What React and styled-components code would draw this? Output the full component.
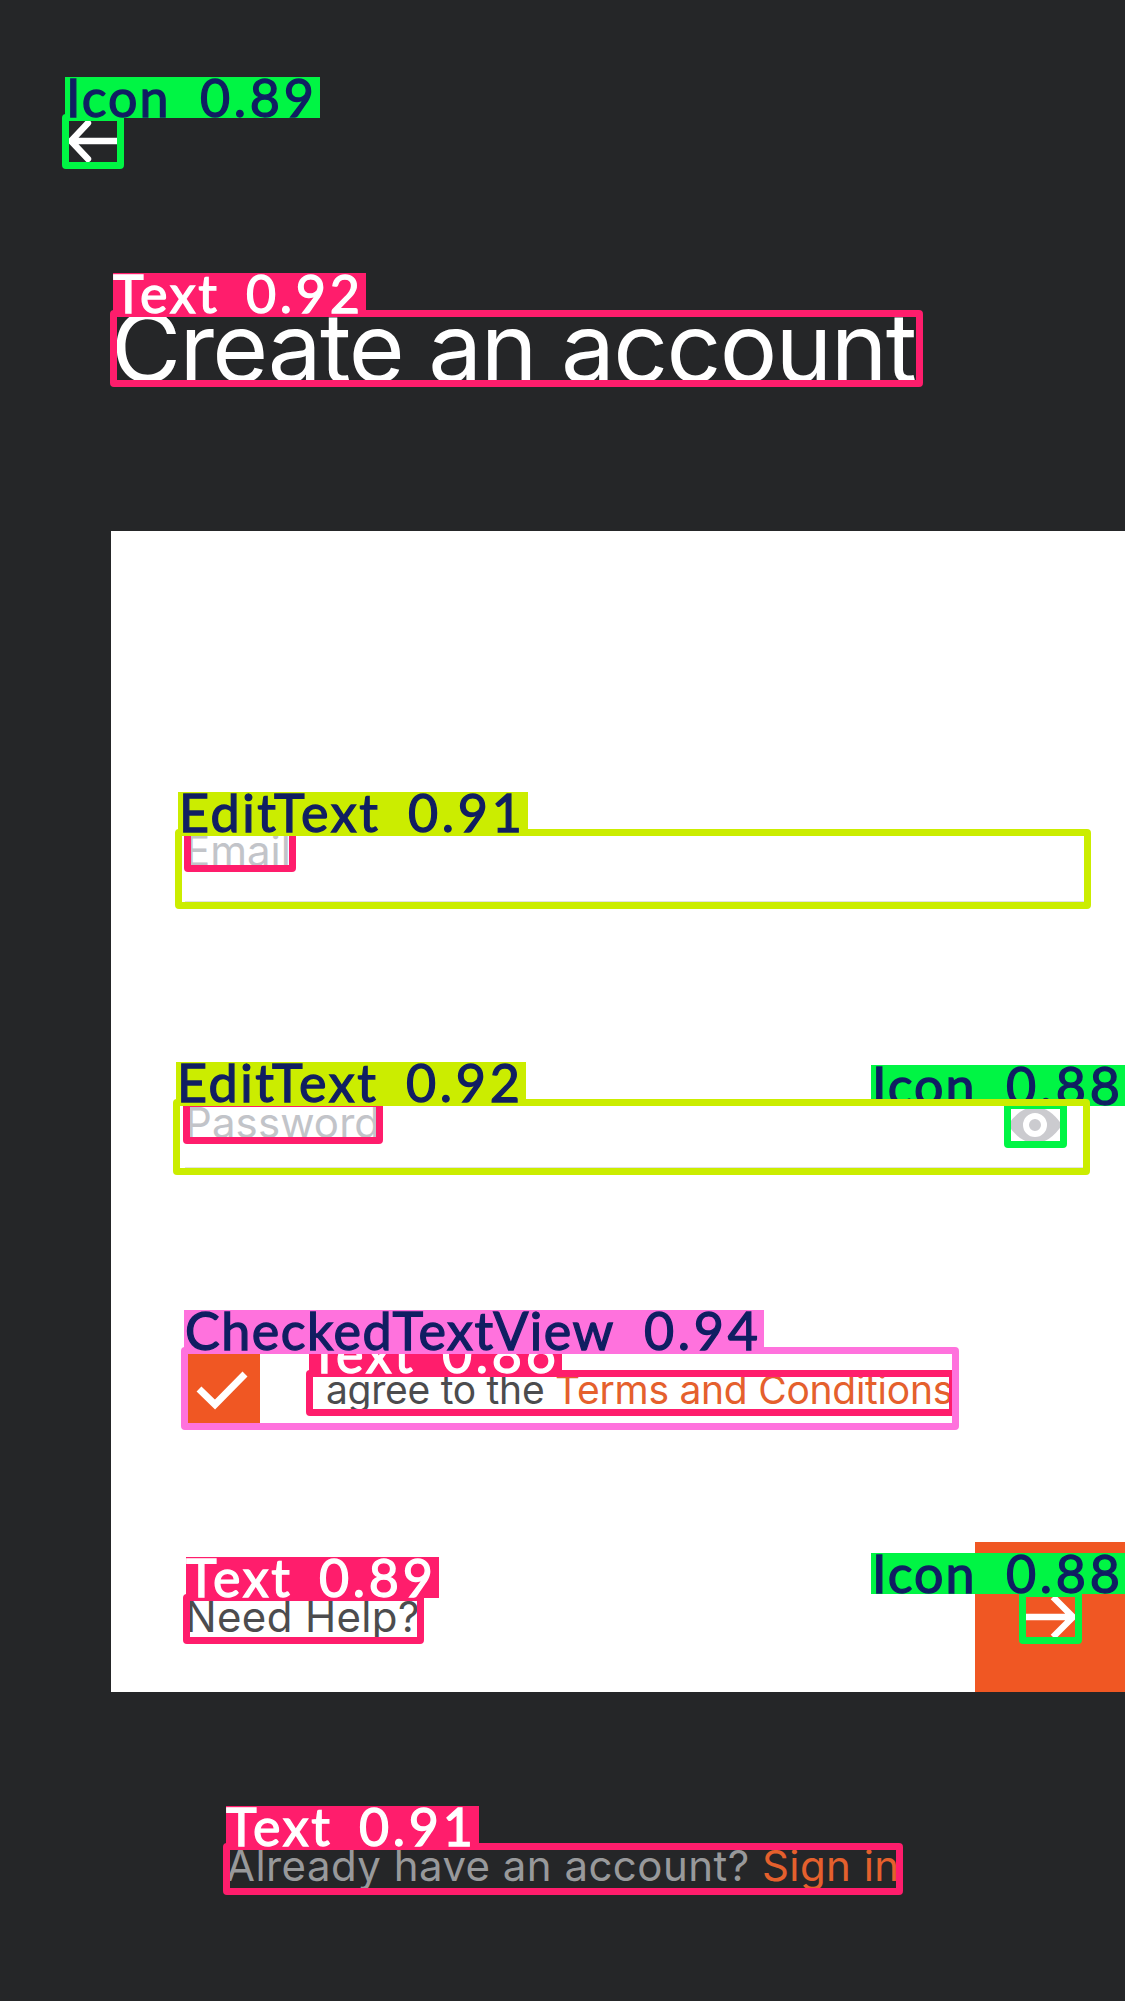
import React from "react";
import styled, { createGlobalStyle } from "styled-components";

const ORANGE = "#f05723";
const PINK = "#ff1d6c";
const GREEN = "#00f544";
const LIME = "#cbed00";
const VIOLET = "#ff72dd";
const NAVY = "#101e62";

const GlobalStyle = createGlobalStyle`
  * { box-sizing: border-box; }
  body { margin: 0; background: #252628; }
`;

const Screen = styled.main`
  position: relative;
  display: flex;
  flex-direction: column;
  width: 1125px;
  height: 2001px;
  overflow: hidden;
  background: #252628;
  font-family: Inter, "Liberation Sans", sans-serif;
  white-space: pre;
`;

const TopBar = styled.header`
  height: 289px;
  padding: 117px 0 0 66px;
  svg { display: block; }
`;

const Title = styled.h1`
  margin: 0 0 126px 111px;
  font-size: 96px;
  line-height: 116px;
  font-weight: 400;
  letter-spacing: ${(p) => p.$spacing}px;
  color: #fff;
`;

const Card = styled.section`
  display: flex;
  flex-direction: column;
  height: 1161px;
  margin-left: 111px;
  padding: 294px 0 0 74px;
  background: #fff;
`;

const Field = styled.div`
  display: flex;
  align-items: flex-start;
  justify-content: space-between;
  width: 900px;
  height: ${(p) => p.$height}px;
  margin-bottom: ${(p) => p.$after}px;
  padding-right: 22px;
  border-bottom: 3px solid #e2e2e4;
`;

const Copy = styled.span`
  font-size: ${(p) => p.$size || 42}px;
  line-height: ${(p) => (p.$size === 39 ? 47 : 51)}px;
  letter-spacing: ${(p) => p.$spacing || 0}px;
  color: ${(p) => p.$color};
`;

const Link = styled.span`
  color: #e5602d;
`;

const Eye = styled.svg`
  margin-top: 8px;
`;

const Terms = styled.div`
  display: flex;
  height: 72px;
  margin: 0 0 119px 3px;
  gap: 45px;
  ${Copy} { margin-top: 15px; }
`;

const CheckBox = styled.span`
  width: 72px;
  height: 72px;
  background: ${ORANGE};
`;

const CardFooter = styled.div`
  display: flex;
  justify-content: space-between;
  height: 150px;
  ${Copy} { margin-top: 49px; }
`;

const NextButton = styled.button`
  width: 150px;
  height: 150px;
  padding: 0 0 0 44px;
  border: 0;
  background: ${ORANGE};
  svg { display: block; }
`;

const SignIn = styled.footer`
  padding: 148px 0 0 226px;
`;

const Outline = styled.div`
  position: absolute;
  left: ${(p) => p.$x}px;
  top: ${(p) => p.$y}px;
  width: ${(p) => p.$w}px;
  height: ${(p) => p.$h}px;
  border: 7px solid ${(p) => p.$color};
  border-radius: 4px;
`;

const Tag = styled.div`
  position: absolute;
  left: ${(p) => p.$x}px;
  top: ${(p) => p.$y}px;
  display: flex;
  justify-content: space-between;
  width: ${(p) => p.$w}px;
  height: 41px;
  background: ${(p) => p.$color};
  color: ${(p) => p.$ink};
  font-family: Lato, sans-serif;
  font-size: 52px;
  line-height: 41px;
  -webkit-text-stroke: 1.3px ${(p) => p.$ink};
`;

const Word = styled.span`
  padding-left: ${(p) => p.$indent}px;
  letter-spacing: ${(p) => p.$spacing}px;
`;

const Score = styled.span`
  width: 120px;
  flex: none;
  letter-spacing: 3.7px;
`;

const WORDS = {
  Text: { width: 253, indent: 0, spacing: 2.6 },
  Icon: { width: 255, indent: 1, spacing: 2 },
  EditText: { width: 350, indent: 1, spacing: 2.6 },
  CheckedTextView: { width: 580, indent: 1, spacing: 1.5 },
};

function Detection({ kind, score, x, y, w, h, color, tagX }) {
  const word = WORDS[kind];
  return (
    <>
      <Outline $x={x} $y={y} $w={w} $h={h} $color={color} />
      {score && (
        <Tag $x={tagX || x + 3} $y={y - 37} $w={word.width} $color={color} $ink={color === PINK ? "#fff" : NAVY}>
          <Word $indent={word.indent} $spacing={word.spacing}>{kind}</Word>
          <Score>{score}</Score>
        </Tag>
      )}
    </>
  );
}

export default function App() {
  return (
    <>
      <GlobalStyle />
      <Screen>
        <TopBar>
          <svg width="54" height="48" fill="none" stroke="#fff" strokeWidth="6.4" strokeLinecap="round">
            <path d="M54 24H6M22 6 5 24 22 42" />
          </svg>
        </TopBar>
        <Title $spacing={-1.65}>Create an account</Title>
        <Card>
          <Field $height={79} $after={193}>
            <Copy $color="#c2c4c9">Email</Copy>
          </Field>
          <Field $height={73} $after={181}>
            <Copy $color="#c2c4c9" $spacing={0.1}>Password</Copy>
            <Eye width="56" height="40">
              <path d="M1 20Q13 2 28 2T55 20Q43 38 28 38T1 20Z" fill="#cbcbcf" />
              <circle cx="28" cy="20" r="9" fill="#cbcbcf" stroke="#fff" strokeWidth="6" />
            </Eye>
          </Field>
          <Terms>
            <CheckBox>
              <svg width="72" height="72" fill="none" stroke="#fff" strokeWidth="7">
                <path d="m11 38 16 15.5 30-30.5" />
              </svg>
            </CheckBox>
            <Copy $size={39} $spacing={-0.26} $color="#4c4c4e">
              I agree to the <Link>Terms and Conditions</Link>
            </Copy>
          </Terms>
          <CardFooter>
            <Copy $color="#4c4c4e" $spacing={0.35}>Need Help?</Copy>
            <NextButton aria-label="Continue">
              <svg width="60" height="54" fill="none" stroke="#fff" strokeWidth="6.4">
                <path d="M6 27h48M34 7l20 20-20 20" />
              </svg>
            </NextButton>
          </CardFooter>
        </Card>
        <SignIn>
          <Copy $color="#98999b" $spacing={0.45}>
            Already have an account? <Link>Sign in</Link>
          </Copy>
        </SignIn>

        <Detection kind="Icon" score="0.89" x={62} y={114} w={62} h={55} color={GREEN} />
        <Detection kind="Text" score="0.92" x={110} y={310} w={813} h={77} color={PINK} />
        <Detection kind="Text" x={184} y={829} w={112} h={43} color={PINK} />
        <Detection kind="EditText" score="0.91" x={175} y={829} w={916} h={80} color={LIME} />
        <Detection kind="Text" x={183} y={1100} w={200} h={44} color={PINK} />
        <Detection kind="Icon" score="0.88" x={1004} y={1102} w={63} h={46} color={GREEN} tagX={871} />
        <Detection kind="EditText" score="0.92" x={173} y={1099} w={917} h={76} color={LIME} />
        <Detection kind="Text" score="0.86" x={306} y={1370} w={650} h={46} color={PINK} />
        <Detection kind="CheckedTextView" score="0.94" x={181} y={1347} w={778} h={83} color={VIOLET} />
        <Detection kind="Text" score="0.89" x={183} y={1594} w={241} h={50} color={PINK} />
        <Detection kind="Icon" score="0.88" x={1019} y={1590} w={63} h={54} color={GREEN} tagX={871} />
        <Detection kind="Text" score="0.91" x={223} y={1843} w={680} h={52} color={PINK} />
      </Screen>
    </>
  );
}
